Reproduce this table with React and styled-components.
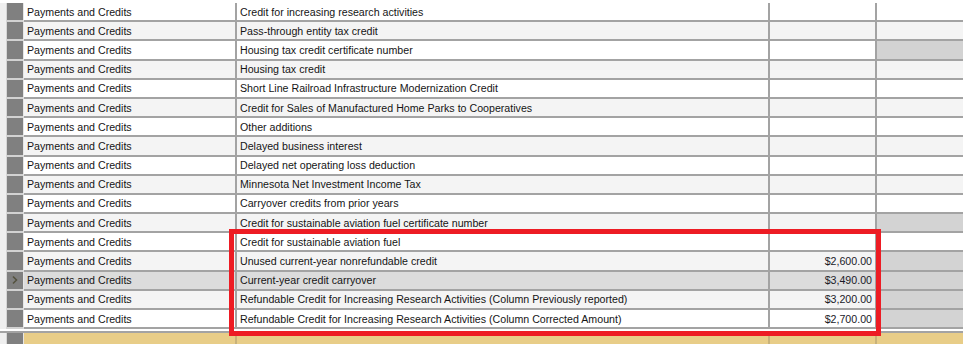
import React from 'react'
import styled, { createGlobalStyle } from 'styled-components'

const rows = [
  { desc: 'Credit for increasing research activities' },
  { desc: 'Pass-through entity tax credit' },
  { desc: 'Housing tax credit certificate number', locked: true },
  { desc: 'Housing tax credit' },
  { desc: 'Short Line Railroad Infrastructure Modernization Credit' },
  { desc: 'Credit for Sales of Manufactured Home Parks to Cooperatives' },
  { desc: 'Other additions' },
  { desc: 'Delayed business interest' },
  { desc: 'Delayed net operating loss deduction' },
  { desc: 'Minnesota Net Investment Income Tax' },
  { desc: 'Carryover credits from prior years' },
  { desc: 'Credit for sustainable aviation fuel certificate number', locked: true },
  { desc: 'Credit for sustainable aviation fuel' },
  { desc: 'Unused current-year nonrefundable credit', amount: '$2,600.00', locked: true },
  { desc: 'Current-year credit carryover', amount: '$3,490.00', locked: true, selected: true },
  { desc: 'Refundable Credit for Increasing Research Activities (Column Previously reported)', amount: '$3,200.00', locked: true },
  { desc: 'Refundable Credit for Increasing Research Activities (Column Corrected Amount)', amount: '$2,700.00', locked: true },
]

const App = () => {
  return (
    <>
      <GlobalStyle />
      <Sheet>
        {rows.map((row, i) => (
          <Row key={i} $alt={i % 2 === 1} $selected={row.selected}>
            <Strip />
            <RowHeader>
              {row.selected && (
                <svg width="8" height="10" viewBox="0 0 8 10">
                  <path d="M2 1.5 L5.5 5 L2 8.5" fill="none" stroke="#55533f" strokeWidth="1.6" />
                </svg>
              )}
            </RowHeader>
            <Cell>Payments and Credits</Cell>
            <Cell>{row.desc}</Cell>
            <Amount>{row.amount}</Amount>
            <LastCell $locked={row.locked} />
          </Row>
        ))}
        <Footer>
          <Strip />
          <RowHeader />
          <FooterCell />
          <FooterCell />
          <FooterCell />
          <FooterCell $last />
        </Footer>
        <Highlight />
      </Sheet>
    </>
  )
}

export default App

const GlobalStyle = createGlobalStyle`
    body {
        margin: 0;
        background: #ffffff;
        font-family: "Liberation Sans", Arial, sans-serif;
        overflow: hidden;
    }
`

const Sheet = styled.div`
    position: relative;
    width: 963px;
    height: 344px;
    padding-top: 3px;
    box-sizing: border-box;
    overflow: hidden;
`

const Row = styled.div`
    display: grid;
    grid-template-columns: 7px 17px 213px 533px 107px 1fr;
    height: 19.2px;
    font-size: 10.65px;
    color: #151515;
    background: ${p => (p.$selected ? '#dcdcdc' : p.$alt ? '#f4f4f4' : '#ffffff')};
`

const Strip = styled.div`
    background: #efefef;
    border-right: 1px solid #d6d6d6;
`

const RowHeader = styled.div`
    display: flex;
    align-items: center;
    justify-content: center;
    background: #808080;
    border-bottom: 2px solid #d2d2d2;
    border-right: 1px solid #e6e6e6;
    box-sizing: border-box;
`

const Cell = styled.div`
    display: flex;
    align-items: center;
    padding: 0 3px;
    border-right: 2px solid #a3a3a3;
    border-bottom: 2px solid #a3a3a3;
    box-sizing: border-box;
    white-space: nowrap;
    overflow: hidden;
`

const Amount = styled(Cell)`
    justify-content: flex-end;
    color: #1a1a28;
`

const LastCell = styled.div`
    background: ${p => (p.$locked ? '#d3d3d3' : 'transparent')};
    border-bottom: 2px solid #a3a3a3;
    box-sizing: border-box;
`

const Footer = styled.div`
    display: grid;
    grid-template-columns: 7px 17px 213px 533px 107px 1fr;
    height: 20px;
    margin-top: 2px;
    border-top: 2px solid #a3a3a3;
`

const FooterCell = styled.div`
    background: #e8cd88;
    border-right: ${p => (p.$last ? 'none' : '2px solid #c8b27a')};
`

const Highlight = styled.div`
    position: absolute;
    left: 229px;
    top: 229px;
    width: 652px;
    height: 107px;
    border: 5px solid #ed1c24;
    box-sizing: border-box;
    pointer-events: none;
`
